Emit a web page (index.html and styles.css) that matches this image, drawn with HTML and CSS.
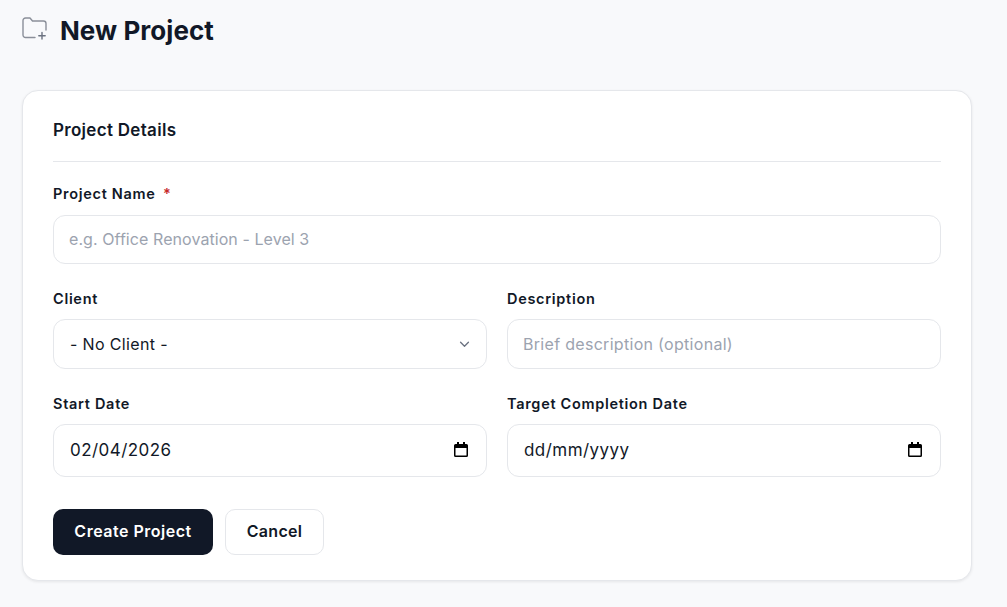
FILE: index.html
```html
<!DOCTYPE html>
<html lang="en">
<head>
    <meta charset="UTF-8">
    <meta name="viewport" content="width=device-width, initial-scale=1.0">
    <title>New Project</title>
    <link rel="stylesheet" href="styles.css">
</head>
<body>
    <header class="page-header">
        <svg class="page-icon" width="26" height="24" viewBox="0 0 26 24" fill="none" stroke-linecap="round" stroke-linejoin="round">
            <path d="M13 20.500H3.500A2.500 2.500 0 0 1 1 18V3.500A2.500 2.500 0 0 1 3.500 1H8l2.500 3H21.500A2.500 2.500 0 0 1 24 6.500V13" stroke="#8a8f99" stroke-width="1.400"/>
            <path d="M20 15.500V22M16.800 18.800H23.200" stroke="#6b7280" stroke-width="1.400"/>
        </svg>
        <h1>New Project</h1>
    </header>

    <form class="card">
        <h2>Project Details</h2>

        <div class="field">
            <label for="projectName">Project Name <span class="required">*</span></label>
            <input class="control name-control" type="text" id="projectName" placeholder="e.g. Office Renovation - Level 3">
        </div>

        <div class="form-row">
            <div class="field">
                <label for="client">Client</label>
                <div class="control select-control">
                    <span>- No Client -</span>
                    <svg width="11" height="7" viewBox="0 0 12 8" fill="none"><path d="M1.500 1.500 6 6l4.500-4.500" stroke="#6b7280" stroke-width="1.500" stroke-linecap="round" stroke-linejoin="round"/></svg>
                </div>
            </div>
            <div class="field">
                <label for="description">Description</label>
                <input class="control desc-control" type="text" id="description" placeholder="Brief description (optional)">
            </div>
        </div>

        <div class="form-row">
            <div class="field">
                <label>Start Date</label>
                <div class="control date-control">
                    <span>02/04/2026</span>
                    <svg width="16" height="16" viewBox="0 0 16 16"><path d="M4 0h2v2h4V0h2v2h1.500A1.500 1.500 0 0 1 15 3.500v10a1.500 1.500 0 0 1-1.500 1.500h-11A1.500 1.500 0 0 1 1 13.500v-10A1.500 1.500 0 0 1 2.500 2H4zM2.500 6v7.500h11V6z" fill="#000"/></svg>
                </div>
            </div>
            <div class="field">
                <label>Target Completion Date</label>
                <div class="control date-control">
                    <span>dd/mm/yyyy</span>
                    <svg width="16" height="16" viewBox="0 0 16 16"><path d="M4 0h2v2h4V0h2v2h1.500A1.500 1.500 0 0 1 15 3.500v10a1.500 1.500 0 0 1-1.500 1.500h-11A1.500 1.500 0 0 1 1 13.500v-10A1.500 1.500 0 0 1 2.500 2H4zM2.500 6v7.500h11V6z" fill="#000"/></svg>
                </div>
            </div>
        </div>

        <div class="actions">
            <button type="button" class="btn btn-primary">Create Project</button>
            <button type="button" class="btn btn-light">Cancel</button>
        </div>
    </form>
</body>
</html>
```

FILE: styles.css
```css
* {
    box-sizing: border-box;
}
html, body {
    height: 607px;
    overflow: hidden;
}
body {
    font-family: Inter, "Liberation Sans", sans-serif;
    margin: 0;
    padding: 0 35px 0 22px;
    background-color: #f8f9fb;
    color: #111827;
}
.page-header {
    display: flex;
    align-items: center;
    gap: 12px;
    height: 60px;
    margin-bottom: 30px;
}
.page-icon {
    flex: none;
    margin-top: -2px;
}
h1 {
    font-size: 26px;
    font-weight: 700;
    letter-spacing: 0.05px;
    margin: 0;
}
.card {
    height: 491px;
    background: white;
    border: 1px solid #e5e7eb;
    border-radius: 16px;
    box-shadow: 0 1px 3px rgba(0, 0, 0, 0.08);
    padding: 30px;
}
h2 {
    font-size: 17px;
    font-weight: 600;
    letter-spacing: 0.3px;
    line-height: 20px;
    margin: -1px 0 22px;
    padding-bottom: 21px;
    border-bottom: 1px solid #e5e7eb;
}
label {
    display: block;
    font-size: 14.500px;
    font-weight: 600;
    letter-spacing: 0.7px;
    line-height: 20px;
    margin-bottom: 11px;
}
.required {
    color: #c62828;
    margin-left: 3px;
}
.field {
    flex: 1 1 0;
    min-width: 0;
}
.form-row {
    display: flex;
    gap: 20px;
    margin-top: 24px;
}
.form-row label {
    padding-top: 1px;
    line-height: 19px;
    height: 20px;
}
.form-row + .form-row .control {
    height: 53px;
}
.control {
    display: flex;
    align-items: center;
    justify-content: space-between;
    width: 100%;
    height: 50px;
    padding: 0 16px;
    font-family: inherit;
    font-size: 16px;
    letter-spacing: 0.35px;
    color: #111827;
    background: white;
    border: 1px solid #e5e7eb;
    border-radius: 12px;
    outline: none;
}
.name-control {
    height: 49px;
    padding: 0 15px 2px;
    letter-spacing: 0.07px;
}
.desc-control {
    padding-left: 15px;
    letter-spacing: 0.3px;
}
.control::placeholder {
    color: #9ca3af;
}
.date-control {
    font-size: 17px;
    letter-spacing: 0.45px;
    padding-bottom: 2px;
}
.date-control svg {
    margin-right: 1px;
}
.actions {
    display: flex;
    gap: 12px;
    margin-top: 32px;
}
.btn {
    height: 46px;
    padding: 0 0 2px;
    font-family: inherit;
    font-size: 16px;
    font-weight: 600;
    border-radius: 10px;
    cursor: pointer;
}
.btn-primary {
    width: 160px;
    background-color: #111827;
    color: white;
    border: none;
    letter-spacing: 0.5px;
}
.btn-light {
    width: 99px;
    background: white;
    color: #111827;
    border: 1px solid #e5e7eb;
    letter-spacing: 0.3px;
}
```
